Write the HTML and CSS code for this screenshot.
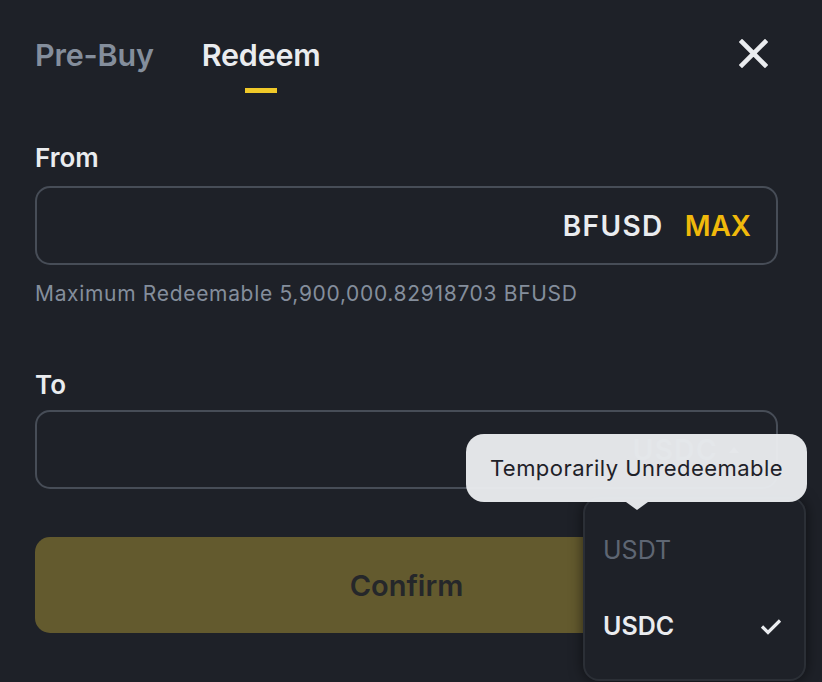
FILE: index.html
```html
<!DOCTYPE html>
<html>
<head>
<meta charset="utf-8">
<link rel="stylesheet" href="styles.css">
</head>
<body>
<div class="panel">
  <div class="header">
    <div class="tabs">
      <div class="tab">Pre-Buy</div>
      <div class="tab active">Redeem<span class="bar"></span></div>
    </div>
    <svg class="close" width="29" height="29" viewBox="0 0 29 29"><path d="M3 3 L26 26 M26 3 L3 26" stroke="#eaecef" stroke-width="4.6" stroke-linecap="square"/></svg>
  </div>

  <div class="label from-label">From</div>
  <div class="field">
    <span class="asset">BFUSD</span>
    <span class="max">MAX</span>
  </div>
  <div class="hint">Maximum Redeemable 5,900,000.82918703 BFUSD</div>

  <div class="label to-label">To</div>
  <div class="field to-field">
    <span class="asset faint">USDC</span>
    <svg class="caret" width="12" height="8" viewBox="0 0 12 8"><path d="M6 1 L11 7 L1 7 Z" fill="#5e6673"/></svg>
  </div>

  <div class="confirm">Confirm</div>

  <div class="dropdown">
    <div class="opt disabled">USDT</div>
    <div class="opt selected">USDC
      <svg width="22" height="17" viewBox="0 0 22 17"><path d="M2 8.5 L8 14.5 L20 2.5" fill="none" stroke="#eaecef" stroke-width="3.2"/></svg>
    </div>
  </div>

  <div class="tooltip">Temporarily Unredeemable<span class="arrow"></span></div>
</div>
</body>
</html>
```

FILE: styles.css
```css
* { box-sizing: border-box; }
html, body {
  margin: 0;
  padding: 0;
  background: #1e2128;
}
body {
  width: 822px;
  height: 682px;
  overflow: hidden;
  font-family: Inter, "Noto Sans", sans-serif;
}
.panel {
  position: relative;
  width: 822px;
  height: 682px;
  padding: 0 45px 0 35px;
  background: #1e2128;
}
.header {
  display: flex;
  justify-content: space-between;
  align-items: flex-start;
  height: 130px;
  padding-top: 33px;
}
.tabs {
  display: flex;
  gap: 48px;
}
.tab {
  position: relative;
  font-size: 30.5px;
  font-weight: 600;
  color: #848e9c;
  line-height: 44px;
  letter-spacing: -0.2px;
}
.tab.active { color: #eaecef; }
.tab .bar {
  position: absolute;
  left: 43px;
  top: 55px;
  width: 32px;
  height: 5px;
  background: #f0c929;
}
.close {
  margin-top: 6px;
  margin-right: 9px;
}
.label {
  font-size: 26px;
  font-weight: 600;
  color: #eaecef;
  line-height: 30px;
}
.from-label { margin-top: 13px; }
.field {
  margin-top: 13px;
  height: 79px;
  border: 2px solid #474d57;
  border-radius: 15px;
  display: flex;
  align-items: center;
  justify-content: flex-end;
  padding-right: 25px;
  gap: 21px;
  width: 743px;
}
.asset {
  font-size: 28px;
  font-weight: 600;
  color: #eaecef;
  letter-spacing: 1.4px;
}
.max {
  font-size: 28px;
  font-weight: 600;
  color: #f0b90b;
}
.hint {
  margin-top: 16px;
  font-size: 21px;
  letter-spacing: 0.68px;
  color: #848e9c;
  line-height: 26px;
}
.to-label { margin-top: 63px; }
.to-field {
  margin-top: 10px;
  gap: 10px;
  padding-right: 36px;
}
.faint { color: #5a5f66; }
.confirm {
  margin-top: 48px;
  width: 743px;
  height: 96px;
  border-radius: 15px;
  background: #635a2e;
  color: #25272a;
  font-size: 29px;
  font-weight: 600;
  display: flex;
  align-items: center;
  justify-content: center;
}
.dropdown {
  position: absolute;
  left: 583px;
  top: 497px;
  width: 223px;
  height: 184px;
  background: #1e2128;
  border: 2px solid #2b2f36;
  border-radius: 16px;
  box-shadow: 0 0 14px rgba(0,0,0,0.55);
  padding: 36px 22px 0 18px;
}
.opt {
  display: flex;
  justify-content: space-between;
  align-items: center;
  font-size: 25px;
  height: 30px;
}
.opt.disabled { color: #5e6673; }
.opt.selected {
  margin-top: 46px;
  color: #eaecef;
  font-weight: 600;
}
.tooltip {
  position: absolute;
  left: 466px;
  top: 434px;
  width: 341px;
  height: 68px;
  border-radius: 18px;
  background: rgba(234, 236, 239, 0.96);
  color: #1e2128;
  font-size: 22px;
  letter-spacing: 0.45px;
  display: flex;
  align-items: center;
  justify-content: center;
}
.arrow {
  position: absolute;
  left: 160px;
  bottom: -8px;
  width: 0;
  height: 0;
  border-left: 11px solid transparent;
  border-right: 11px solid transparent;
  border-top: 8px solid rgba(234, 236, 239, 0.96);
}
```
